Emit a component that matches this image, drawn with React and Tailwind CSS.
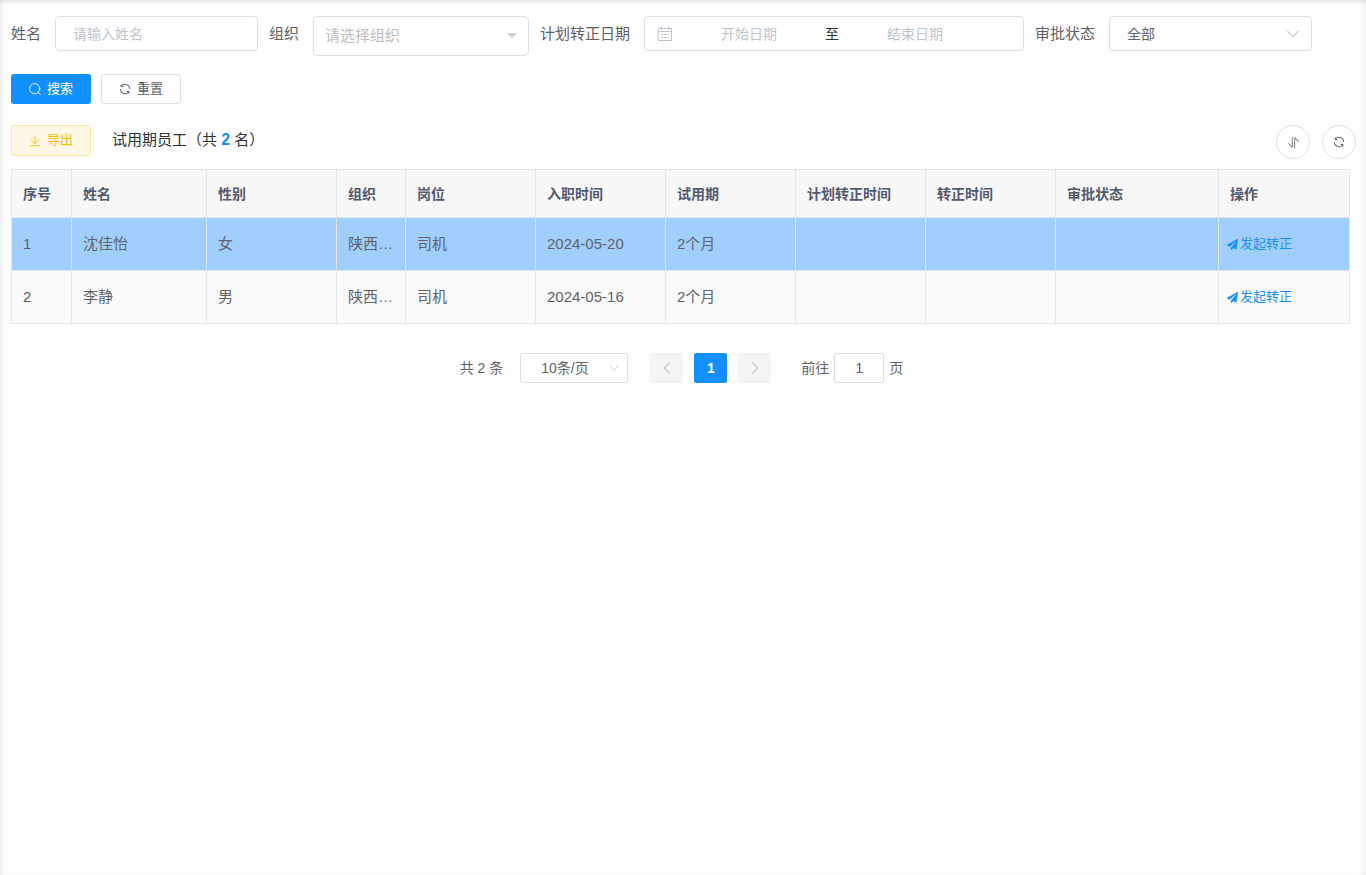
import React, { useState } from 'react';
import { FaPaperPlane } from 'react-icons/fa';

const columns = [
  { key: 'index', title: '序号', width: 60 },
  { key: 'name', title: '姓名', width: 135 },
  { key: 'gender', title: '性别', width: 130 },
  { key: 'org', title: '组织', width: 69 },
  { key: 'post', title: '岗位', width: 130 },
  { key: 'entryDate', title: '入职时间', width: 130 },
  { key: 'probation', title: '试用期', width: 130 },
  { key: 'planDate', title: '计划转正时间', width: 130 },
  { key: 'formalDate', title: '转正时间', width: 130 },
  { key: 'status', title: '审批状态', width: 163 },
];

const staff = [
  { index: 1, name: '沈佳怡', gender: '女', org: '陕西…', post: '司机', entryDate: '2024-05-20', probation: '2个月' },
  { index: 2, name: '李静', gender: '男', org: '陕西…', post: '司机', entryDate: '2024-05-16', probation: '2个月' },
];

// Line icons used by the buttons and inputs
const Icon = ({ className, children }) => (
  <svg
    viewBox="0 0 16 16"
    fill="none"
    stroke="currentColor"
    strokeLinecap="round"
    strokeLinejoin="round"
    aria-hidden="true"
    className={className}
  >
    {children}
  </svg>
);

const SearchIcon = () => (
  <Icon className="h-3 w-3">
    <circle cx="7.6" cy="7.6" r="6.8" strokeWidth="1.2" />
    <path d="M12.6 12.6l2.6 2.4" strokeWidth="1.2" />
  </Icon>
);

const RefreshIcon = () => (
  <svg viewBox="64 64 896 896" fill="currentColor" aria-hidden="true" className="h-3 w-3">
    <path d="M771.776 794.88A384 384 0 0 1 128 512h64a320 320 0 0 0 555.712 216.448H654.72a32 32 0 1 1 0-64h149.056a32 32 0 0 1 32 32v148.928a32 32 0 1 1-64 0v-50.56zM276.288 295.616h92.992a32 32 0 0 1 0 64H220.16a32 32 0 0 1-32-32V178.56a32 32 0 0 1 64 0v50.56A384 384 0 0 1 896.128 512h-64a320 320 0 0 0-555.776-216.384z" />
  </svg>
);

const SortIcon = () => (
  <svg viewBox="0 0 1024 1024" fill="currentColor" aria-hidden="true" className="h-[13px] w-[13px]">
    <path d="M384 96a32 32 0 0 1 64 0v786.752a32 32 0 0 1-54.592 22.656L95.936 608a32 32 0 0 1 0-45.312h.128a32 32 0 0 1 45.184 0L384 805.632zm192 45.248a32 32 0 0 1 54.592-22.592L928.064 416a32 32 0 0 1 0 45.312h-.128a32 32 0 0 1-45.184 0L640 218.496V928a32 32 0 1 1-64 0z" />
  </svg>
);

const DownloadIcon = () => (
  <Icon className="h-3 w-3">
    <path d="M8 1.5v9.5M3.2 6.6L8 11.2l4.8-4.6M1.5 14.4h13" strokeWidth="1.2" />
  </Icon>
);

const CalendarIcon = () => (
  <Icon className="h-4 w-4">
    <path d="M1.5 2.5h13v12h-13zM1.5 5.5h13M4.5 1v2.5M11.5 1v2.5" />
    <path d="M4 8.5h1.4M7.3 8.5h1.4M10.6 8.5h1.4M4 11.5h1.4M7.3 11.5h1.4M10.6 11.5h1.4" />
  </Icon>
);

const ChevronDown = ({ className }) => (
  <Icon className={className}>
    <path d="M2 5l6 6 6-6" strokeWidth="1.2" />
  </Icon>
);

function App() {
  const [name, setName] = useState('');
  const [org, setOrg] = useState('');
  const [startDate, setStartDate] = useState('');
  const [endDate, setEndDate] = useState('');
  const [status, setStatus] = useState('all');
  const [pageSize, setPageSize] = useState('10');
  const [page, setPage] = useState('1');
  const [currentRow, setCurrentRow] = useState(1);

  // Clear every search field
  const handleReset = () => {
    setName('');
    setOrg('');
    setStartDate('');
    setEndDate('');
    setStatus('all');
  };

  return (
    <div className="min-h-screen bg-[#fefefe] pt-4 pr-2.5 pl-[11px] font-['Liberation_Sans','Noto_Sans_CJK_SC',sans-serif] text-sm text-[#606266] shadow-[inset_0_4px_4px_-2px_rgba(0,21,41,0.1),inset_4px_0_4px_-2px_rgba(0,21,41,0.07),inset_-6px_0_8px_-4px_rgba(0,21,41,0.05)]">
      {/* Search form */}
      <form className="flex flex-wrap items-start gap-x-[11px] gap-y-4" onSubmit={(e) => e.preventDefault()}>
        <div className="flex items-center gap-3.5">
          <label htmlFor="name" className="text-[15px]">姓名</label>
          <input
            id="name"
            type="text"
            placeholder="请输入姓名"
            className="h-[35px] w-[203px] rounded border border-[#dcdfe6] bg-white px-[17px] outline-none placeholder:text-[#c0c4cc]"
            value={name}
            onChange={(e) => setName(e.target.value)}
          />
        </div>
        <div className="flex items-start gap-3.5">
          <label htmlFor="org" className="text-[15px] leading-[35px]">组织</label>
          <div className="relative">
            <select
              id="org"
              className="h-10 w-[216px] appearance-none rounded-[5px] border border-[#ddd] bg-white px-[11px] text-[15px] text-[#bdbdbd] outline-none"
              value={org}
              onChange={(e) => setOrg(e.target.value)}
            >
              <option value="">请选择组织</option>
              <option value="sx">陕西分公司</option>
            </select>
            <svg viewBox="0 0 10 6" fill="#ccc" aria-hidden="true" className="pointer-events-none absolute top-[17px] right-3 h-1.5 w-2.5">
              <path d="M0 0h10L5 5.6z" />
            </svg>
          </div>
        </div>
        <div className="flex items-center gap-3.5">
          <label htmlFor="start" className="text-[15px]">计划转正日期</label>
          <div className="flex h-[35px] w-95 items-center rounded border border-[#dcdfe6] bg-white pr-8 pl-3 text-[#c0c4cc]">
            <CalendarIcon />
            <input
              id="start"
              type="text"
              placeholder="开始日期"
              className="min-w-0 flex-1 text-center text-[#606266] outline-none placeholder:text-[#c0c4cc]"
              value={startDate}
              onChange={(e) => setStartDate(e.target.value)}
            />
            <span className="text-[#303133]">至</span>
            <input
              type="text"
              placeholder="结束日期"
              aria-label="结束日期"
              className="min-w-0 flex-1 text-center text-[#606266] outline-none placeholder:text-[#c0c4cc]"
              value={endDate}
              onChange={(e) => setEndDate(e.target.value)}
            />
          </div>
        </div>
        <div className="flex items-center gap-3.5">
          <label htmlFor="status" className="text-[15px]">审批状态</label>
          <div className="relative">
            <select
              id="status"
              className="h-[35px] w-[203px] appearance-none rounded border border-[#dcdfe6] bg-white px-[17px] outline-none"
              value={status}
              onChange={(e) => setStatus(e.target.value)}
            >
              <option value="all">全部</option>
              <option value="pending">审批中</option>
              <option value="passed">已通过</option>
            </select>
            <span className="pointer-events-none absolute inset-y-0 right-3 flex items-center text-[#c0c4cc]">
              <ChevronDown className="h-3.5 w-3.5" />
            </span>
          </div>
        </div>
        <div className="flex w-full gap-2.5 pt-0.5 text-[13px]">
          <button type="submit" className="flex h-[30px] w-20 items-center justify-center gap-1.5 rounded-[3px] bg-[#1190ff] text-white">
            <SearchIcon />
            搜索
          </button>
          <button
            type="button"
            className="flex h-[30px] w-20 items-center justify-center gap-1.5 rounded-[3px] border border-[#dcdfe6] bg-white"
            onClick={handleReset}
          >
            <RefreshIcon />
            重置
          </button>
        </div>
      </form>

      {/* Toolbar */}
      <div className="mt-[21px] flex items-start">
        <button type="button" className="flex h-[31px] w-20 items-center justify-center gap-1.5 rounded-[3px] border border-[#ffe3a1] bg-[#fff8e6] text-[13px] text-[#ffba00]">
          <DownloadIcon />
          导出
        </button>
        <p className="ml-[21px] text-[15px] leading-[30px] text-[#303133]">
          试用期员工（共 <b className="text-base leading-[30px] text-[#1890ff]">{staff.length}</b> 名）
        </p>
        <div className="ml-auto flex gap-3">
          <button type="button" aria-label="排序" className="flex h-[34px] w-[34px] items-center justify-center rounded-full border border-[#dcdfe6] bg-white">
            <SortIcon />
          </button>
          <button type="button" aria-label="刷新" className="flex h-[34px] w-[34px] items-center justify-center rounded-full border border-[#dcdfe6] bg-white">
            <RefreshIcon />
          </button>
        </div>
      </div>

      {/* Staff on probation */}
      <div className="mt-2.5 pr-1.5">
        <table className="w-full table-fixed border-collapse border border-[#dfe6ec] text-left">
          <colgroup>
            {columns.map((col) => (
              <col key={col.key} style={{ width: col.width }} />
            ))}
            <col style={{ width: 131 }} />
          </colgroup>
          <thead>
            <tr className="h-12 bg-[#f8f8f9] text-[#515a6e]">
              {columns.map((col) => (
                <th key={col.key} className="border border-[#dfe6ec] px-[11px] font-bold">{col.title}</th>
              ))}
              <th className="border border-[#dfe6ec] px-[11px] font-bold">操作</th>
            </tr>
          </thead>
          <tbody>
            {staff.map((row) => (
              <tr
                key={row.index}
                className={row.index === currentRow ? 'h-[53px] bg-[#a0cfff]' : 'h-[53px] bg-[#fafafa]'}
                onClick={() => setCurrentRow(row.index)}
              >
                {columns.map((col) => (
                  <td key={col.key} className="border border-[#dfe6ec] px-[11px] text-[15px] whitespace-nowrap">{row[col.key]}</td>
                ))}
                <td className="border border-[#dfe6ec] px-2">
                  <button type="button" className="flex items-center gap-0.5 text-[13px] text-[#1890ff]">
                    <FaPaperPlane className="h-[11px] w-[11px]" />
                    发起转正
                  </button>
                </td>
              </tr>
            ))}
          </tbody>
        </table>
      </div>

      {/* Pagination */}
      <div className="flex items-center justify-center pt-[29px] pr-1">
        <span>共 {staff.length} 条</span>
        <div className="relative ml-[17px]">
          <select
            aria-label="每页条数"
            className="h-[30px] w-27 appearance-none rounded-[3px] border border-[#dcdfe6] bg-white pl-5 outline-none"
            value={pageSize}
            onChange={(e) => setPageSize(e.target.value)}
          >
            <option value="10">10条/页</option>
            <option value="20">20条/页</option>
          </select>
          <span className="pointer-events-none absolute inset-y-0 right-2 flex items-center text-[#c0c4cc]">
            <ChevronDown className="h-3 w-3" />
          </span>
        </div>
        <div className="mx-[22px] flex gap-[11px]">
          <button type="button" disabled aria-label="上一页" className="flex h-[30px] w-[33px] items-center justify-center rounded-xs bg-[#f4f4f5] text-[#c0c4cc]">
            <Icon className="h-3.5 w-3.5"><path d="M10.5 2.5L5 8l5.5 5.5" strokeWidth="1.4" /></Icon>
          </button>
          <button type="button" className="h-[30px] w-[33px] rounded-xs bg-[#1190ff] font-bold text-white">1</button>
          <button type="button" disabled aria-label="下一页" className="flex h-[30px] w-[33px] items-center justify-center rounded-xs bg-[#f4f4f5] text-[#c0c4cc]">
            <Icon className="h-3.5 w-3.5"><path d="M5.5 2.5L11 8l-5.5 5.5" strokeWidth="1.4" /></Icon>
          </button>
        </div>
        <label className="ml-2 flex items-center gap-[5px]">
          前往
          <input
            type="text"
            className="h-[30px] w-[50px] rounded-[3px] border border-[#dcdfe6] bg-white text-center outline-none"
            value={page}
            onChange={(e) => setPage(e.target.value)}
          />
          页
        </label>
      </div>
    </div>
  );
}

export default App;
